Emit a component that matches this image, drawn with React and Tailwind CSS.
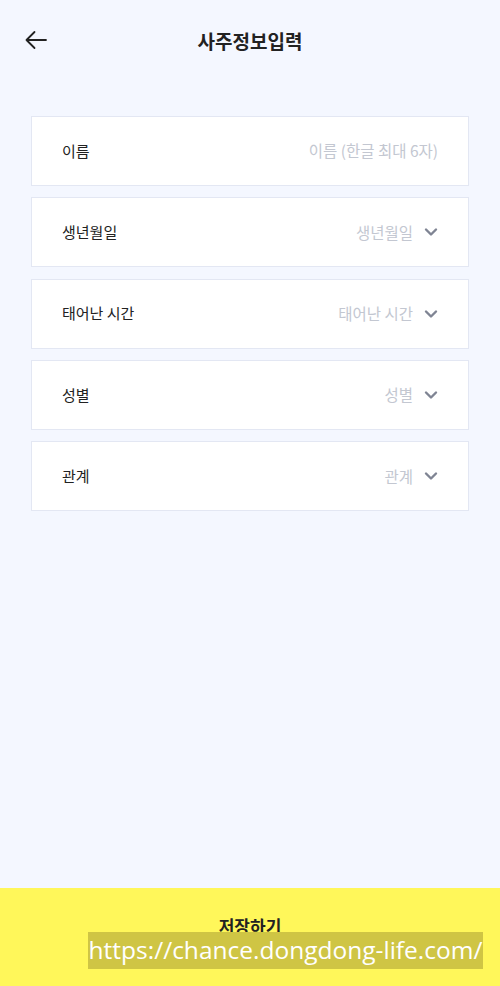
import React from "react";

const fields = [
  { label: "이름", placeholder: "이름 (한글 최대 6자)", select: false },
  { label: "생년월일", placeholder: "생년월일", select: true },
  { label: "태어난 시간", placeholder: "태어난 시간", select: true },
  { label: "성별", placeholder: "성별", select: true },
  { label: "관계", placeholder: "관계", select: true },
];

function Chevron() {
  return (
    <svg width="14" height="14" viewBox="0 0 14 14" className="ml-[11px]">
      <path d="M2 4.5 L7 9.5 L12 4.5" fill="none" stroke="#7f8493" strokeWidth="2.4" strokeLinecap="round" strokeLinejoin="round" />
    </svg>
  );
}

export default function App() {
  return (
    <div
      className="relative flex h-[986px] w-[500px] flex-col bg-[#f4f7ff]"
      style={{ fontFamily: '"Noto Sans CJK KR", "Noto Sans", sans-serif' }}
    >
      <header className="relative flex h-[82px] items-center justify-center">
        <button className="absolute left-[24px] top-[30px]">
          <svg width="24" height="20" viewBox="0 0 24 20">
            <path d="M22 10 H2.5 M10.5 2 L2.5 10 L10.5 18" fill="none" stroke="#222" strokeWidth="1.8" strokeLinecap="round" strokeLinejoin="round" />
          </svg>
        </button>
        <h1 className="text-[19px] font-bold text-[#222]">사주정보입력</h1>
      </header>

      <main className="mt-[34px] flex flex-col gap-[11.3px] px-[31px]">
        {fields.map((f) => (
          <div
            key={f.label}
            className="flex h-[70px] items-center justify-between border border-[#e3e7f3] bg-white pl-[30px] pr-[30px]"
          >
            <span className="text-[15px] text-[#222]">{f.label}</span>
            <div className="flex items-center">
              <span className="text-[15.5px] text-[#c3c7d1]">{f.placeholder}</span>
              {f.select && <Chevron />}
            </div>
          </div>
        ))}
      </main>

      <footer className="mt-auto flex h-[98px] items-start justify-center bg-[#fff75a] pt-[24px]">
        <span className="text-[17px] font-bold leading-[28px] text-[#222]">저장하기</span>
      </footer>

      <div
        className="absolute left-[88px] top-[932px] flex h-[37px] w-[395px] items-center justify-center whitespace-nowrap bg-[#cfc544] text-[24.5px] leading-none text-white"
        style={{ fontFamily: '"Open Sans", "DejaVu Sans", sans-serif' }}
      >
        https://chance.dongdong-life.com/
      </div>
    </div>
  );
}
